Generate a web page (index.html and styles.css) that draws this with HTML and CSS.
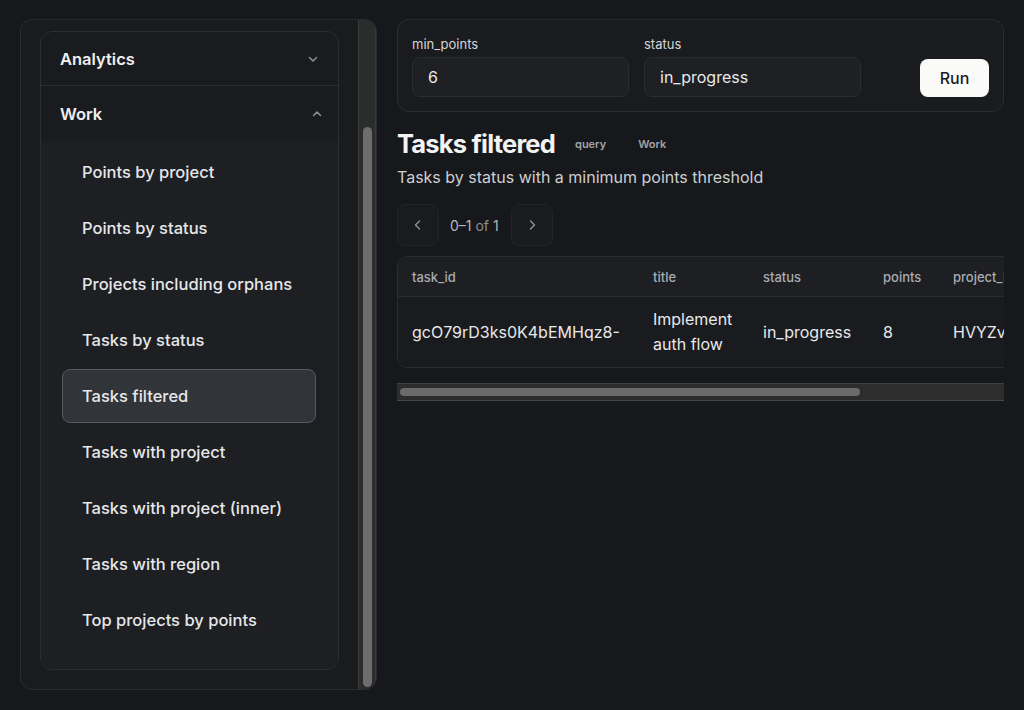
FILE: index.html
```html
<!DOCTYPE html>
<html>
	<head>
		<meta charset="UTF-8">
		<title>Tasks filtered</title>
		<link rel="stylesheet" href="styles.css">
	</head>
	<body>
		<div class="app">
			<!--左侧查询列表-->
			<div class="side">
				<div class="sideInner">
					<div class="menu">
						<div class="group">
							<div class="groupHead">
								<span>Analytics</span>
								<svg class="chev" width="12" height="12" viewBox="0 0 12 12"><path d="M2.5 4.5 6 8l3.5-3.5"/></svg>
							</div>
						</div>
						<div class="group open">
							<div class="groupHead">
								<span>Work</span>
								<svg class="chev" width="12" height="12" viewBox="0 0 12 12"><path d="M2.5 7.5 6 4l3.5 3.5"/></svg>
							</div>
							<ul class="items">
								<li>Points by project</li>
								<li>Points by status</li>
								<li>Projects including orphans</li>
								<li>Tasks by status</li>
								<li class="active">Tasks filtered</li>
								<li>Tasks with project</li>
								<li>Tasks with project (inner)</li>
								<li>Tasks with region</li>
								<li>Top projects by points</li>
							</ul>
						</div>
					</div>
				</div>
				<!--滚动条-->
				<div class="track"><div class="thumb"></div></div>
			</div>

			<!--右侧内容-->
			<div class="main">
				<div class="params">
					<div class="field">
						<label>min_points</label>
						<div class="input">6</div>
					</div>
					<div class="field">
						<label>status</label>
						<div class="input">in_progress</div>
					</div>
					<button class="run">Run</button>
				</div>

				<div class="titleRow">
					<h1>Tasks filtered</h1>
					<span class="badge">query</span>
					<span class="badge work">Work</span>
				</div>
				<p class="desc">Tasks by status with a minimum points threshold</p>

				<!--分页-->
				<div class="pager">
					<div class="pbtn">
						<svg width="14" height="14" viewBox="0 0 14 14"><path d="M8.5 3 4.5 7l4 4"/></svg>
					</div>
					<span class="count">0–1 <em>of</em> 1</span>
					<div class="pbtn">
						<svg width="14" height="14" viewBox="0 0 14 14"><path d="M5.5 3l4 4-4 4"/></svg>
					</div>
				</div>

				<div class="tableWrap">
					<table class="grid">
						<thead>
							<tr>
								<th class="c1">task_id</th>
								<th class="c2">title</th>
								<th class="c3">status</th>
								<th class="c4">points</th>
								<th class="c5">project_id</th>
							</tr>
						</thead>
						<tbody>
							<tr>
								<td>gcO79rD3ks0K4bEMHqz8-</td>
								<td>Implement auth flow</td>
								<td>in_progress</td>
								<td>8</td>
								<td>HVYZvQ3m8Lk2pT9sRw1x</td>
							</tr>
						</tbody>
					</table>
				</div>
				<!--横向滚动条-->
				<div class="hbar"><div class="hthumb"></div></div>
			</div>
		</div>
	</body>
</html>
```

FILE: styles.css
```css
*{
	margin: 0;
	padding: 0;
	box-sizing: border-box;
	list-style: none;
}
body{
	background: #17181b;
	color: #e8e9eb;
	font-family: Inter, "Noto Sans", "DejaVu Sans", sans-serif;
}
.app{
	display: flex;
	gap: 20px;
	padding: 19px 20px 20px 20px;
}

/* sidebar */
.side{
	width: 357px;
	height: 671px;
	flex-shrink: 0;
	display: flex;
	background: #1a1b1e;
	border: 1px solid #2a2c30;
	border-radius: 12px;
	overflow: hidden;
}
.sideInner{
	flex: 1;
	padding: 11px 19px 0 19px;
}
.menu{
	width: 299px;
	border: 1px solid #2c2e33;
	border-radius: 12px;
	overflow: hidden;
	background: #1a1b1e;
}
.groupHead{
	display: flex;
	align-items: center;
	justify-content: space-between;
	height: 54px;
	padding: 0 19px 0 19px;
	font-size: 16.5px;
	font-weight: 600;
	color: #eeeff1;
	border-bottom: 1px solid #2c2e33;
}
.open .groupHead{
	height: 55px;
	padding-right: 15px;
	border-bottom: none;
}
.chev{
	fill: none;
	stroke: #8c8f94;
	stroke-width: 1.5;
	stroke-linecap: round;
	stroke-linejoin: round;
}
.items{
	background: #1d1f22;
	padding: 4px 22px 22px 21px;
}
.items li{
	height: 54px;
	margin-bottom: 2px;
	display: flex;
	align-items: center;
	padding-left: 19px;
	font-size: 16.5px;
	font-weight: 500;
	color: #e6e7e9;
	border: 1px solid transparent;
	border-radius: 8px;
}
.items li:last-child{
	margin-bottom: 0;
}
.items .active{
	background: #313438;
	border-color: #56595e;
}
.track{
	width: 18px;
	background: #2b2c2c;
	border-left: 1px solid #3a3b3b;
	border-right: 1px solid #3a3b3b;
	padding: 107px 3px 0 4px;
}
.thumb{
	height: 560px;
	background: #6d6d6d;
	border-radius: 5px;
}

/* main */
.main{
	flex: 1;
	min-width: 0;
}
.params{
	display: flex;
	align-items: flex-end;
	gap: 15px;
	height: 93px;
	padding: 14px 14px;
	border: 1px solid #2a2c30;
	border-radius: 12px;
	background: #1a1b1e;
}
.field label{
	display: block;
	font-size: 13px;
	line-height: 18px;
	color: #d4d6d9;
	margin-bottom: 4px;
}
.field .input{
	width: 217px;
	height: 40px;
	line-height: 38px;
	padding-left: 15px;
	font-size: 16px;
	color: #e8e9eb;
	background: #1e2024;
	border: 1px solid #2a2c31;
	border-radius: 8px;
}
.run{
	margin-left: auto;
	width: 69px;
	height: 38px;
	border: none;
	border-radius: 8px;
	background: #fafaf8;
	color: #1a1b1e;
	font-family: inherit;
	font-size: 16px;
	font-weight: 500;
}
.titleRow{
	display: flex;
	align-items: center;
	margin-top: 16px;
}
.titleRow h1{
	font-size: 25.5px;
	line-height: 32px;
	font-weight: 700;
	letter-spacing: -0.8px;
	color: #f2f3f4;
}
.badge{
	margin-left: 20px;
	font-size: 11px;
	font-weight: 600;
	color: #a2a5aa;
}
.badge.work{
	margin-left: 32px;
}
.desc{
	margin-top: 6px;
	font-size: 16px;
	line-height: 22px;
	color: #cdcfd2;
}
.pager{
	display: flex;
	align-items: center;
	margin-top: 16px;
}
.pbtn{
	width: 42px;
	height: 42px;
	display: flex;
	align-items: center;
	justify-content: center;
	border: 1px solid #222428;
	border-radius: 8px;
	background: #1a1b1e;
}
.pbtn svg{
	fill: none;
	stroke: #8c8f94;
	stroke-width: 1.5;
	stroke-linecap: round;
	stroke-linejoin: round;
}
.count{
	margin: 0 12px 0 11px;
	font-size: 14px;
	color: #b3b6ba;
}
.count em{
	font-style: normal;
	color: #8d9095;
}

/* table */
.tableWrap{
	margin-top: 10px;
	overflow: hidden;
}
.grid{
	width: 790px;
	table-layout: fixed;
	border-collapse: separate;
	border-spacing: 0;
	border: 1px solid #2a2c30;
	border-radius: 10px;
	overflow: hidden;
}
.grid .c1{ width: 241px; }
.grid .c2{ width: 110px; }
.grid .c3{ width: 120px; }
.grid .c4{ width: 70px; }
.grid .c5{ width: 247px; }
.grid th{
	height: 40px;
	padding: 0 14px;
	text-align: left;
	font-size: 13px;
	font-weight: 500;
	color: #a9acb1;
	background: #1d1f22;
	border-bottom: 1px solid #2a2c30;
	white-space: nowrap;
	overflow: hidden;
}
.grid td{
	height: 69px;
	padding: 10px 14px;
	font-size: 16px;
	line-height: 25px;
	color: #e8e9eb;
	background: #1a1b1e;
	vertical-align: middle;
	white-space: normal;
}
.grid td:last-child{
	white-space: nowrap;
}
.hbar{
	margin-top: 15px;
	height: 18px;
	padding: 4px 3px;
	background: #2c2d2c;
	border-top: 1px solid #3e3f3e;
	border-bottom: 1px solid #454645;
}
.hthumb{
	width: 460px;
	height: 8px;
	background: #6b6b6b;
	border-radius: 4px;
}
```
